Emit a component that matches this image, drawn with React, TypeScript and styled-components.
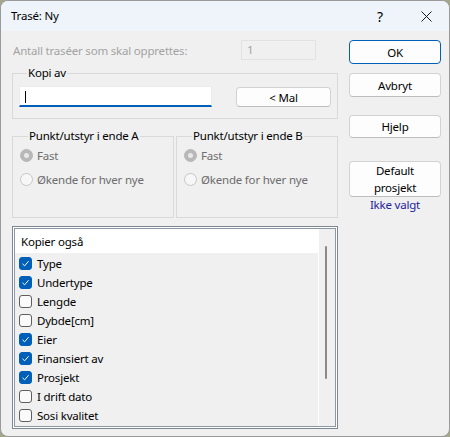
import React from "react";
import styled, { createGlobalStyle } from "styled-components";

const Global = createGlobalStyle`
  html, body { margin: 0; padding: 0; }
  body { background: #a4a78c; font-family: "Noto Sans", "Segoe UI", sans-serif; }
  * { box-sizing: border-box; }
`;

const Window = styled.div`
  width: 450px;
  height: 437px;
  background: #f0f0f0;
  border: 1px solid #9a9a9a;
  border-radius: 8px;
  overflow: hidden;
  display: flex;
  flex-direction: column;
  font-size: 11.5px;
  letter-spacing: -0.2px;
  color: #000;
`;

const TitleBar = styled.div`
  height: 30px;
  background: #eef4f9;
  display: flex;
  align-items: center;
  padding-left: 10px;
  flex-shrink: 0;
`;

const Title = styled.div`
  flex: 1;
  font-size: 11.5px;
  line-height: 16px;
`;

const TitleButton = styled.div`
  width: 46px;
  height: 30px;
  display: flex;
  align-items: center;
  justify-content: center;
  font-size: 14px;
`;

const Body = styled.div`
  display: grid;
  grid-template-columns: 326px 93px;
  column-gap: 11px;
  padding: 9px 0 0 11px;
`;

const LeftCol = styled.div`
  display: flex;
  flex-direction: column;
`;

const CountRow = styled.div`
  height: 20px;
  display: flex;
  align-items: center;
  justify-content: space-between;
  padding-right: 22px;
`;

const DisabledLabel = styled.span`
  color: #a3a3a3;
  padding-left: 1px;
`;

const CountBox = styled.div`
  width: 75px;
  height: 20px;
  border: 1px solid #e2e2e2;
  color: #a3a3a3;
  padding-left: 5px;
  line-height: 18px;
`;

const Group = styled.fieldset<{ $h: number }>`
  margin: 0;
  padding: 0;
  border: 1px solid #d9d9d9;
  height: ${(p) => p.$h}px;
  min-width: 0;
`;

const Legend = styled.legend`
  margin-left: 8px;
  padding: 0 1px;
  line-height: 16px;
  font-size: 11.5px;
`;

const CopyGroup = styled(Group)`
  margin-top: 5px;
  display: flex;
  align-items: flex-start;
  padding: 5px 0 0 6px;
  gap: 24px;
`;

const TextField = styled.div`
  width: 193px;
  height: 21px;
  background: #fff;
  border: 1px solid #ececec;
  border-bottom: 2px solid #005fb8;
  padding: 4px 0 0 5px;
`;

const Caret = styled.div`
  width: 1px;
  height: 12px;
  background: #000;
`;

const Button = styled.div<{ $w?: number; $h?: number; $default?: boolean }>`
  width: ${(p) => p.$w ?? 92}px;
  height: ${(p) => p.$h ?? 24}px;
  background: #fdfdfd;
  border: 1px solid ${(p) => (p.$default ? "#005fb8" : "#d2d2d2")};
  border-bottom-color: ${(p) => (p.$default ? "#005fb8" : "#bdbdbd")};
  border-radius: 4px;
  display: flex;
  align-items: center;
  justify-content: center;
  text-align: center;
  line-height: 17px;
  font-size: 11.5px;
`;

const MalButton = styled(Button)`
  margin-top: 1px;
`;

const EndsRow = styled.div`
  display: grid;
  grid-template-columns: 162px 162px;
  column-gap: 2px;
  margin-top: 9px;
`;

const RadioGroup = styled(Group)`
  padding: 1px 0 0 7px;
  display: flex;
  flex-direction: column;
  gap: 4px;
`;

const RadioRow = styled.div`
  height: 20px;
  display: flex;
  align-items: center;
  gap: 4px;
  color: #6d6d6d;
`;

const RadioCircle = styled.div<{ $checked?: boolean }>`
  width: 13px;
  height: 13px;
  border-radius: 50%;
  border: 1px solid ${(p) => (p.$checked ? "#b8b8b8" : "#c6c6c6")};
  background: ${(p) => (p.$checked ? "#b8b8b8" : "#f7f7f7")};
  display: flex;
  align-items: center;
  justify-content: center;
  &::after {
    content: "";
    display: ${(p) => (p.$checked ? "block" : "none")};
    width: 5px;
    height: 5px;
    border-radius: 50%;
    background: #e8e8e8;
  }
`;

const ListBox = styled.div`
  margin-top: 8px;
  height: 203px;
  border: 1px solid #7b8793;
  padding: 1px;
  background: #fff;
`;

const ListInner = styled.div`
  height: 100%;
  border: 1px solid #8e98a2;
  background: #f0f0f0;
  display: flex;
`;

const ListArea = styled.div`
  width: 304px;
  border-right: 1px solid #fff;
  display: flex;
  flex-direction: column;
`;

const ListHeader = styled.div`
  height: 24px;
  background: #fff;
  padding-left: 6px;
  display: flex;
  align-items: center;
  margin-right: -1px;
`;

const Items = styled.div`
  padding-top: 1px;
  display: flex;
  flex-direction: column;
`;

const Item = styled.div`
  height: 19px;
  display: flex;
  align-items: center;
  padding-left: 4px;
  gap: 5px;
`;

const Check = styled.div<{ $checked: boolean }>`
  width: 13px;
  height: 13px;
  border-radius: 3px;
  border: 1px solid ${(p) => (p.$checked ? "#005fb8" : "#5f5f5f")};
  background: ${(p) => (p.$checked ? "#005fb8" : "#fafafa")};
  display: flex;
  align-items: center;
  justify-content: center;
`;

const Scrollbar = styled.div`
  width: 15px;
  padding: 17px 0 0 6px;
`;

const Thumb = styled.div`
  width: 2px;
  height: 133px;
  background: #8a8a8a;
  border-radius: 1px;
`;

const RightCol = styled.div`
  display: flex;
  flex-direction: column;
  align-items: flex-start;
`;

const Spacer = styled.div<{ $h: number }>`
  height: ${(p) => p.$h}px;
`;

const LinkText = styled.div`
  width: 92px;
  text-align: center;
  color: #23239b;
  margin-top: 0px;
  line-height: 15px;
`;

const items: [string, boolean][] = [
  ["Type", true],
  ["Undertype", true],
  ["Lengde", false],
  ["Dybde[cm]", false],
  ["Eier", true],
  ["Finansiert av", true],
  ["Prosjekt", true],
  ["I drift dato", false],
  ["Sosi kvalitet", false],
];

function EndGroup({ label }: { label: string }) {
  return (
    <RadioGroup $h={90}>
      <Legend>{label}</Legend>
      <RadioRow>
        <RadioCircle $checked />
        <span>Fast</span>
      </RadioRow>
      <RadioRow>
        <RadioCircle />
        <span>Økende for hver nye</span>
      </RadioRow>
    </RadioGroup>
  );
}

export default function App() {
  return (
    <>
      <Global />
      <Window>
        <TitleBar>
          <Title>Trasé: Ny</Title>
          <TitleButton>?</TitleButton>
          <TitleButton>
            <svg width="11" height="11" viewBox="0 0 11 11">
              <path d="M0.5 0.5 L10.5 10.5 M10.5 0.5 L0.5 10.5" stroke="#1a1a1a" strokeWidth="1" fill="none" />
            </svg>
          </TitleButton>
        </TitleBar>
        <Body>
          <LeftCol>
            <CountRow>
              <DisabledLabel>Antall traséer som skal opprettes:</DisabledLabel>
              <CountBox>1</CountBox>
            </CountRow>
            <CopyGroup $h={54}>
              <Legend>Kopi av</Legend>
              <TextField>
                <Caret />
              </TextField>
              <MalButton $w={95} $h={20}>&lt; Mal</MalButton>
            </CopyGroup>
            <EndsRow>
              <EndGroup label="Punkt/utstyr i ende A" />
              <EndGroup label="Punkt/utstyr i ende B" />
            </EndsRow>
            <ListBox>
              <ListInner>
                <ListArea>
                  <ListHeader>Kopier også</ListHeader>
                  <Items>
                    {items.map(([name, checked]) => (
                      <Item key={name}>
                        <Check $checked={checked}>
                          {checked && (
                            <svg width="9" height="9" viewBox="0 0 9 9">
                              <path d="M1.5 4.8 L3.6 6.8 L7.6 2.2" stroke="#fff" strokeWidth="1" fill="none" />
                            </svg>
                          )}
                        </Check>
                        <span>{name}</span>
                      </Item>
                    ))}
                  </Items>
                </ListArea>
                <Scrollbar>
                  <Thumb />
                </Scrollbar>
              </ListInner>
            </ListBox>
          </LeftCol>
          <RightCol>
            <Button $default>OK</Button>
            <Spacer $h={9} />
            <Button>Avbryt</Button>
            <Spacer $h={18} />
            <Button $h={23}>Hjelp</Button>
            <Spacer $h={23} />
            <Button $h={36}>
              Default
              <br />
              prosjekt
            </Button>
            <LinkText>Ikke valgt</LinkText>
          </RightCol>
        </Body>
      </Window>
    </>
  );
}
